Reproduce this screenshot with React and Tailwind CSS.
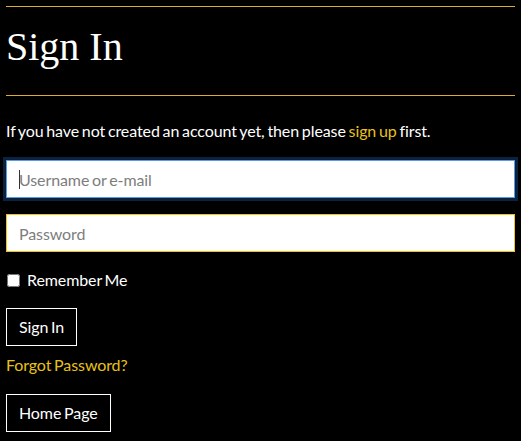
import React from "react";

export default function App() {
  const lato = { fontFamily: "Lato, 'Open Sans', sans-serif" };
  return (
    <div
      className="min-h-[441px] w-full bg-black px-[6px] pt-[6px] text-white tracking-[-0.1px] [word-spacing:-1.2px]"
      style={lato}
    >
      <div className="h-px w-full bg-[#dcae2f]" />
      <h1
        className="mt-[17px] mb-[25px] text-[40px] leading-[46px] font-normal tracking-normal [word-spacing:0px]"
        style={{ fontFamily: "'Liberation Serif', 'Times New Roman', serif" }}
      >
        Sign In
      </h1>
      <div className="h-px w-full bg-[#dcae2f]" />
      <p className="mt-[23px] text-[16px] leading-[24px]">
        If you have not created an account yet, then please{" "}
        <a className="text-[#e8c21a]" href="#">
          sign up
        </a>{" "}
        first.
      </p>
      <div className="relative mt-[17px]">
        <input
          type="text"
          placeholder="Username or e-mail"
          className="block h-[38px] w-full border border-[#5b9be0] bg-white px-[12px] text-[16px] text-black placeholder:text-[#7d7d7d] shadow-[0_0_0_3px_#0b2140] outline-none tracking-[-0.1px] [word-spacing:-1.2px]"
          style={lato}
        />
        <span className="pointer-events-none absolute left-[13px] top-[10px] h-[19px] w-px bg-[#333]" />
      </div>
      <input
        type="password"
        placeholder="Password"
        className="mt-[16px] block h-[38px] w-full border border-[#f2c21b] bg-white px-[12px] text-[16px] text-black placeholder:text-[#7d7d7d] outline-none tracking-[-0.1px]"
        style={lato}
      />
      <label className="mt-[16px] flex h-[24px] items-center text-[16px]">
        <input type="checkbox" className="m-0 ml-px h-[13px] w-[13px]" />
        <span className="ml-[7px]">Remember Me</span>
      </label>
      <button
        className="mt-[16px] block h-[38px] border border-white px-[12px] text-[16px] text-white tracking-[-0.1px] [word-spacing:-1.2px]"
        style={lato}
      >
        Sign In
      </button>
      <a
        href="#"
        className="mt-[7px] block w-fit text-[16px] leading-[24px] text-[#e8c21a]"
      >
        Forgot Password?
      </a>
      <button
        className="mt-[17px] block h-[38px] border border-white px-[12px] text-[16px] text-white tracking-[-0.1px] [word-spacing:-1.2px]"
        style={lato}
      >
        Home Page
      </button>
    </div>
  );
}
